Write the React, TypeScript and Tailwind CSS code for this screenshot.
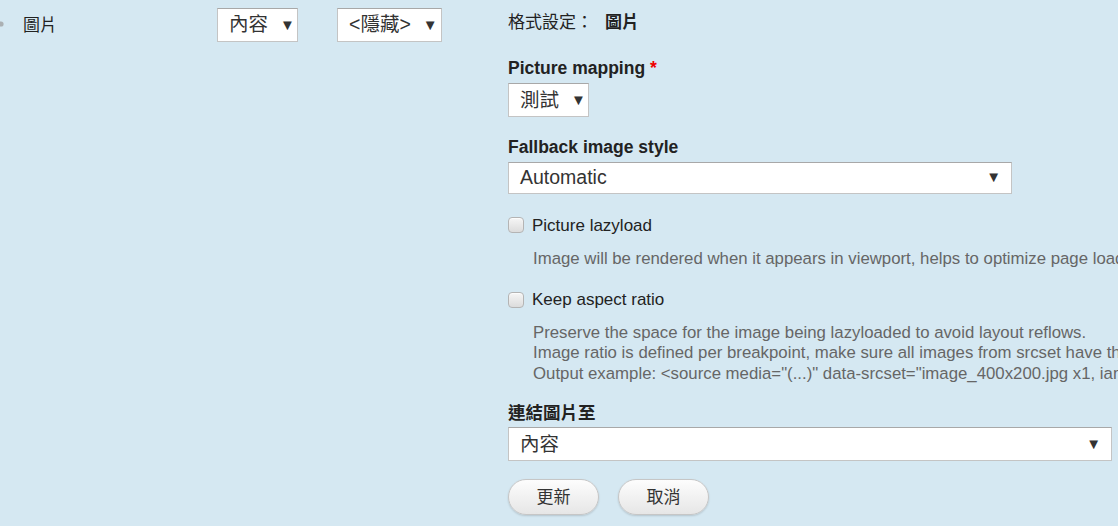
import React from "react";

const font = { fontFamily: '"Liberation Sans", "Noto Sans CJK TC", Arial, sans-serif' };

type SelectProps = {
  value: string;
  className?: string;
};

const Select = ({ value, className = "" }: SelectProps) => {
  return (
    <div
      className={`flex shrink-0 items-center justify-between gap-3 border border-[#c4c4c4] border-t-[#a8a8a8] bg-white pl-[11px] pr-[10px] text-[19.5px] text-[#333] ${className}`}
    >
      <span className="whitespace-nowrap">{value}</span>
      <span className="text-[15px] text-[#333]">▼</span>
    </div>
  );
};

const Checkbox = ({ label }: { label: string }) => {
  return (
    <div className="flex items-center gap-2">
      <span className="h-4 w-4 rounded-[4px] border border-[#b4b4b4] bg-gradient-to-b from-[#f6f6f6] to-[#dcdcdc] shadow-[inset_0_1px_1px_rgba(255,255,255,0.8)]" />
      <span className="text-[17px] text-[#222]">{label}</span>
    </div>
  );
};

const Button = ({ title }: { title: string }) => {
  return (
    <button className="flex h-9 w-[91px] items-center justify-center rounded-[18px] border border-[#c6c6c6] bg-gradient-to-b from-[#fdfdfd] to-[#e6e6e6] text-[17px] text-[#333] shadow-[0_1px_2px_rgba(0,0,0,0.15)]">
      {title}
    </button>
  );
};

export default function App() {
  return (
    <div
      className="h-[526px] w-[1118px] overflow-hidden bg-[#d5e8f2] text-[#222]"
      style={font}
    >
      <div className="flex pt-2">
        <div className="flex w-[217px] shrink-0 items-start pt-[5px]">
          <svg width="8" height="10" viewBox="0 0 8 10" className="mt-[6px] -ml-[3px]">
            <circle cx="4" cy="5" r="2.6" fill="#999" opacity="0.7" />
          </svg>
          <span className="ml-[18px] text-[17px] text-[#222]">圖片</span>
        </div>
        <div className="w-[120px] shrink-0">
          <Select value="內容" className="h-[34px] w-[81px]" />
        </div>
        <div className="w-[171px] shrink-0">
          <Select value="<隱藏>" className="h-[34px] w-[105px]" />
        </div>

        <div className="min-w-0 flex-1">
          <div className="flex h-[30px] items-center text-[17px]">
            <span>格式設定：</span>
            <span className="ml-3 font-bold">圖片</span>
          </div>

          <div className="mt-[17px] text-[17.5px] font-bold">
            Picture mapping <span className="text-[#e00]">*</span>
          </div>
          <Select value="測試" className="mt-[2px] h-[34px] w-[81px]" />

          <div className="mt-[17px] text-[17.5px] font-bold">Fallback image style</div>
          <Select value="Automatic" className="mt-[1px] h-[32px] w-[504px]" />

          <div className="mt-[19px]">
            <Checkbox label="Picture lazyload" />
          </div>
          <div className="mt-[8px] whitespace-nowrap pl-[25px] text-[16.8px] text-[#666]">
            Image will be rendered when it appears in viewport, helps to optimize page load speed.
          </div>

          <div className="mt-[16px]">
            <Checkbox label="Keep aspect ratio" />
          </div>
          <div className="mt-[10px] whitespace-nowrap pl-[25px] text-[16.8px] leading-[20.5px] text-[#666]">
            <div>Preserve the space for the image being lazyloaded to avoid layout reflows.</div>
            <div>
              Image ratio is defined per breakpoint, make sure all images from srcset have the same aspect ratio.
            </div>
            <div>
              Output example: &lt;source media="(...)" data-srcset="image_400x200.jpg x1, iamge_800x400.jpg x2"&gt;
            </div>
          </div>

          <div className="mt-[16px] text-[17.5px] font-bold">連結圖片至</div>
          <Select value="內容" className="mt-[1px] h-[34px] w-[604px]" />

          <div className="mt-[18px] flex gap-[19px]">
            <Button title="更新" />
            <Button title="取消" />
          </div>
        </div>
      </div>
    </div>
  );
}
